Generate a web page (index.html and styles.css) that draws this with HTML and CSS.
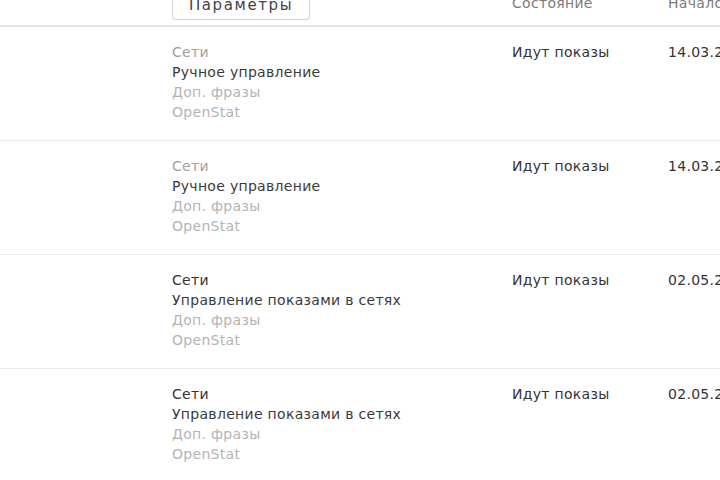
FILE: index.html
```html
<!DOCTYPE html>
<html lang="ru">
<head>
    <meta charset="UTF-8">
    <meta name="viewport" content="width=device-width, initial-scale=1.0">
    <title>Кампании</title>
    <link rel="stylesheet" href="styles.css">
</head>
<body>
    <div class="table">
        <div class="row head">
            <div class="cell"></div>
            <div class="cell">
                <button class="params">Параметры</button>
            </div>
            <div class="cell title">Состояние</div>
            <div class="cell title">Начало</div>
        </div>

        <div class="row">
            <div class="cell"></div>
            <div class="cell info">
                <div class="muted">Сети</div>
                <div class="strategy">Ручное управление</div>
                <div class="light">Доп. фразы</div>
                <div class="light">OpenStat</div>
            </div>
            <div class="cell state">Идут показы</div>
            <div class="cell date">14.03.2013</div>
        </div>

        <div class="row">
            <div class="cell"></div>
            <div class="cell info">
                <div class="muted">Сети</div>
                <div class="strategy">Ручное управление</div>
                <div class="light">Доп. фразы</div>
                <div class="light">OpenStat</div>
            </div>
            <div class="cell state">Идут показы</div>
            <div class="cell date">14.03.2013</div>
        </div>

        <div class="row">
            <div class="cell"></div>
            <div class="cell info">
                <div class="dark">Сети</div>
                <div class="strategy">Управление показами в сетях</div>
                <div class="light">Доп. фразы</div>
                <div class="light">OpenStat</div>
            </div>
            <div class="cell state">Идут показы</div>
            <div class="cell date">02.05.2013</div>
        </div>

        <div class="row">
            <div class="cell"></div>
            <div class="cell info">
                <div class="dark">Сети</div>
                <div class="strategy">Управление показами в сетях</div>
                <div class="light">Доп. фразы</div>
                <div class="light">OpenStat</div>
            </div>
            <div class="cell state">Идут показы</div>
            <div class="cell date">02.05.2013</div>
        </div>
    </div>
</body>
</html>
```

FILE: styles.css
```css
body {
    margin: 0;
    background: #fff;
    font-family: "DejaVu Sans", Verdana, sans-serif;
    font-size: 14px;
    letter-spacing: 0.3px;
    color: #333;
    overflow: hidden;
}
.table {
    width: 720px;
    overflow: hidden;
}
.row {
    display: grid;
    grid-template-columns: 172px 340px 156px 1fr;
    padding: 15px 0 18px;
    border-bottom: 1px solid #ececec;
    line-height: 20px;
    white-space: nowrap;
}
.cell {
    overflow: hidden;
}
.head {
    margin-top: -5px;
    padding: 0 0 5px;
    height: 32px;
    box-sizing: border-box;
    border-bottom: 2px solid #e3e3e3;
    align-items: end;
}
.title {
    color: #7a7a7a;
    padding-bottom: 7px;
}
.params {
    font-family: inherit;
    font-size: 15px;
    letter-spacing: 1.6px;
    color: #444;
    background: #fff;
    border: 1px solid #d4d4d4;
    border-radius: 4px;
    box-shadow: 0 1px 1px rgba(0, 0, 0, 0.08);
    width: 138px;
    height: 30px;
    padding: 0;
    line-height: 22px;
}
.muted {
    color: #a0a0a0;
}
.dark {
    color: #333;
}
.strategy {
    color: #3a3a3a;
}
.light {
    color: #b4b4b4;
}
.state, .date {
    color: #333;
}
```
